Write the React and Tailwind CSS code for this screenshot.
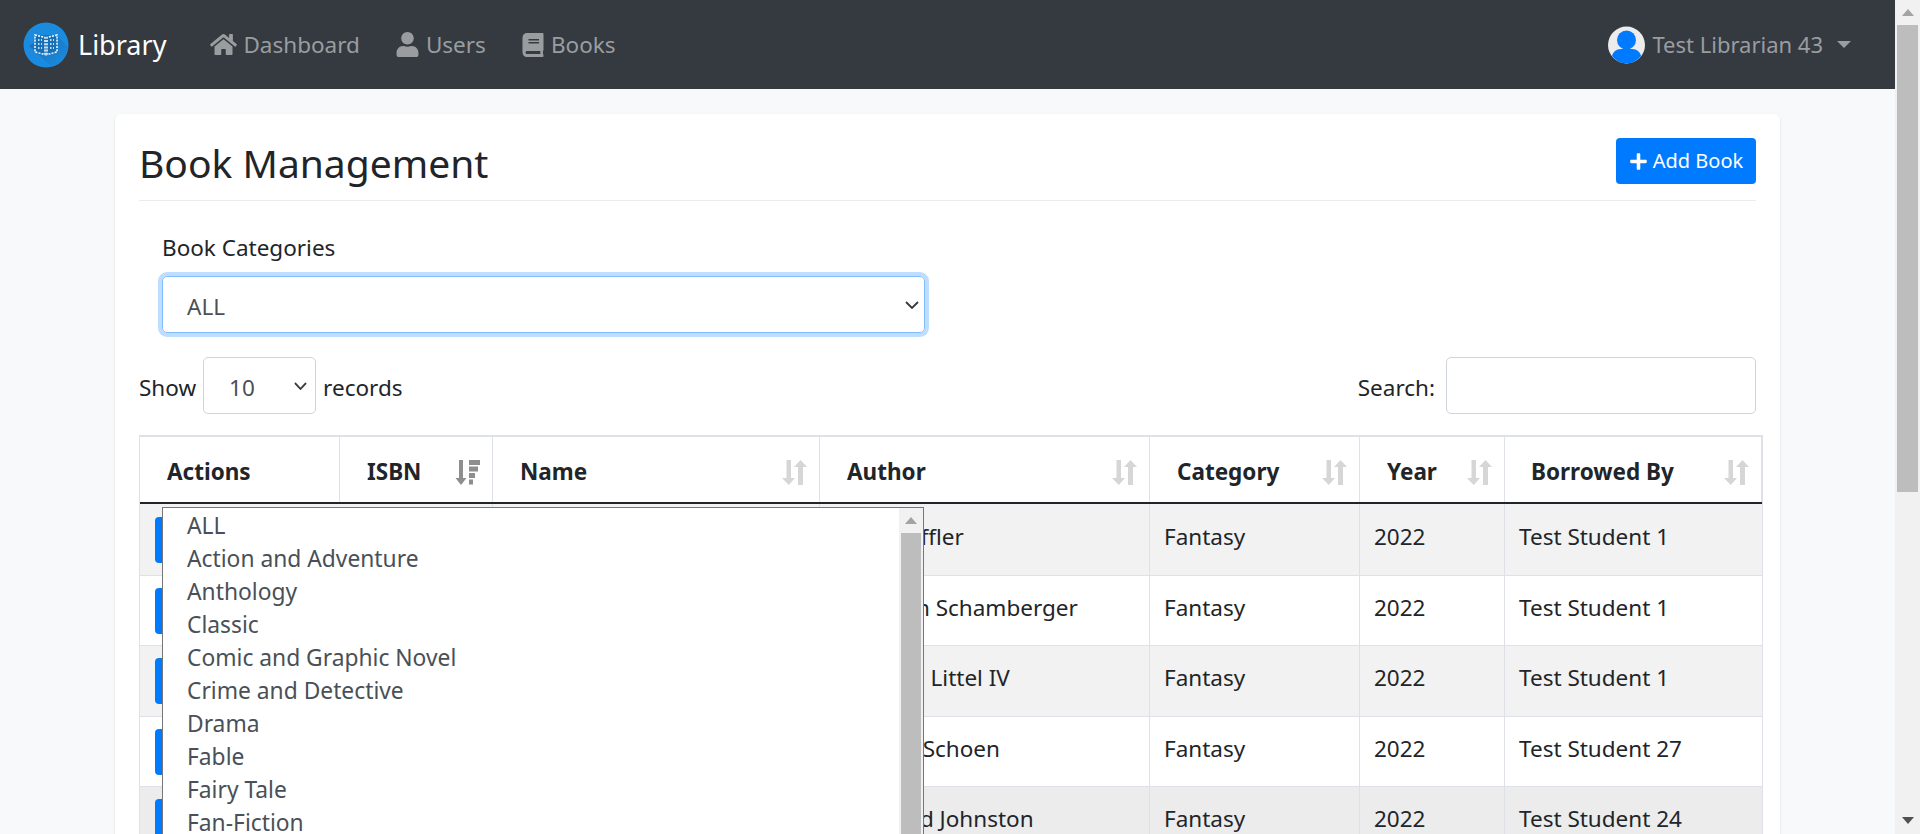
import { FaHome, FaUser, FaBook, FaPlus } from 'react-icons/fa'

const font = { fontFamily: '"Noto Sans", sans-serif' }

const categories = [
  'ALL', 'Action and Adventure', 'Anthology', 'Classic', 'Comic and Graphic Novel',
  'Crime and Detective', 'Drama', 'Fable', 'Fairy Tale', 'Fan-Fiction',
]

const rows = [
  { author: 'Mrs. Pfeffler', by: 'Test Student 1', h: 'h-[72px]', bg: 'bg-[#f2f2f2]' },
  { author: 'Jonathon Schamberger', by: 'Test Student 1', h: 'h-[70px]', bg: 'bg-white' },
  { author: 'Mr. Theo Littel IV', by: 'Test Student 1', h: 'h-[71px]', bg: 'bg-[#f2f2f2]' },
  { author: 'Martina Schoen', by: 'Test Student 27', h: 'h-[70px]', bg: 'bg-white' },
  { author: 'Bernhard Johnston', by: 'Test Student 24', h: 'h-[71px]', bg: 'bg-[#ececec]' },
]

function SortIcon() {
  return (
    <svg width="25" height="25" viewBox="0 0 25 25" fill="#d6d6d6" className="shrink-0">
      <path d="M4.500 0h4.500v18h4L6.750 25 0 18h4.500z" />
      <path d="M16 25h5V7h4L18.500 0 12 7h4z" />
    </svg>
  )
}

function SortActiveIcon() {
  return (
    <svg width="25" height="25" viewBox="0 0 25 25" fill="#8e8e8e" className="shrink-0">
      <path d="M4 0h4v18h3.500L6 25 .5 18H4z" />
      <path d="M14 0h11v5H14zM14 6.500h9v5h-9zM14 13h6v5h-6zM14 19.500h4v5h-4z" />
    </svg>
  )
}

function Chevron({ w = 14 }) {
  return (
    <svg width={w} height="8" viewBox="0 0 14 8" fill="none" stroke="#343a40" strokeWidth="1.800" preserveAspectRatio="none">
      <path d="M1 1l6 6 6-6" />
    </svg>
  )
}

function Logo() {
  return (
    <svg width="46" height="46" viewBox="0 0 46 46">
      <defs>
        <clipPath id="logo-clip"><circle cx="23" cy="23" r="22.500" /></clipPath>
        <linearGradient id="logo-shadow" x1="0.100" y1="0.100" x2="0.900" y2="0.900">
          <stop offset="0" stopColor="#1670b8" />
          <stop offset="1" stopColor="#1b8be0" />
        </linearGradient>
      </defs>
      <circle cx="23" cy="23" r="22.500" fill="#1b8be0" />
      <path d="M12 13L34 13L46 27V46H30L6 24L12 20z" fill="url(#logo-shadow)" clipPath="url(#logo-clip)" />
      <path d="M12 13l10 2.500v17L12 30zM34 13l-10 2.500v17L34 30z" fill="#176fb5" stroke="#fff" strokeWidth="1.500" strokeDasharray="2 1.200" />
      <path d="M15 18h4M15 22h4M15 26h4M27 18h4M27 22h4M27 26h4" stroke="#fff" strokeWidth="1.500" strokeDasharray="1.500 1.500" />
    </svg>
  )
}

function Avatar() {
  return (
    <svg width="37" height="38" viewBox="0 0 37 38" className="shrink-0">
      <circle cx="18.500" cy="19" r="18.500" fill="#ececec" />
      <circle cx="18.500" cy="14" r="9.500" fill="#007bff" />
      <path d="M4 30c1-4 4-7 9-7h11c5 0 8 3 9 7a18 18 0 0 1-29 0z" fill="#007bff" />
    </svg>
  )
}

function NavLink({ icon, label }) {
  return (
    <a className="flex items-center gap-[6px] text-[22.5px] text-[#9a9da0]">
      {icon}
      <span>{label}</span>
    </a>
  )
}

function Th({ label, w, icon, pad = 'pl-[27px]' }) {
  return (
    <div className={`${w} ${pad} flex items-center justify-between border-r border-[#dee2e6] pr-[12px] pt-[5px] text-[22.5px] font-bold text-[#212529]`}>
      <span>{label}</span>
      {icon}
    </div>
  )
}

export default function App() {
  return (
    <div className="flex h-[834px] w-[1920px] overflow-hidden bg-[#f8f9fa]" style={font}>
      <div className="relative flex w-[1895px] flex-col">
        <nav className="flex h-[89px] shrink-0 items-center bg-[#343a40] pl-[23px] pr-[44px]">
          <Logo />
          <span className="ml-[9px] pt-[2px] text-[27px] text-white">Library</span>
          <div className="ml-[44px] flex items-center gap-[35px]">
            <NavLink icon={<FaHome size={27} />} label="Dashboard" />
            <NavLink icon={<FaUser size={25} />} label="Users" />
            <NavLink icon={<FaBook size={24} />} label="Books" />
          </div>
          <div className="ml-auto flex items-center text-[22px] text-[#9a9da0]">
            <Avatar />
            <span className="ml-[7px]">Test Librarian 43</span>
            <span className="ml-[14px] h-0 w-0 border-x-[7px] border-t-[7px] border-x-transparent border-t-[#9a9da0]" />
          </div>
        </nav>

        <main className="ml-[115px] mt-[25px] w-[1665px] rounded-[6px] bg-white px-[24px] pt-[24px] shadow-sm">
          <div className="flex h-[63px] items-start justify-between border-b border-[#e9ecef]">
            <h2 className="text-[39px] leading-[50px] text-[#212529]">Book Management</h2>
            <button className="flex h-[46px] w-[140px] items-center justify-center gap-[5px] rounded-[4px] bg-[#007bff] text-[20px] text-white">
              <FaPlus size={19} />
              Add Book
            </button>
          </div>

          <div className="mt-[31px] pl-[23px]">
            <div className="text-[22.5px] leading-[32px] text-[#212529]">Book Categories</div>
            <div className="mt-[12px] flex h-[57px] w-[763px] items-center justify-between rounded-[5px] border border-[#80bdff] pl-[24px] pr-[5px] text-[22.5px] text-[#495057] shadow-[0_0_0_4px_rgba(0,123,255,0.25)]">
              <span className="pt-[5px]">ALL</span>
              <Chevron />
            </div>
          </div>

          <div className="mt-[24px] flex h-[57px] items-center justify-between">
            <div className="flex items-center text-[22.5px] text-[#212529]">
              <span className="pt-[4px]">Show</span>
              <div className="ml-[7px] flex h-[57px] w-[113px] items-center justify-between rounded-[5px] border border-[#ced4da] pl-[25px] pr-[8px] text-[#495057]">
                <span className="pt-[4px]">10</span>
                <Chevron w={13} />
              </div>
              <span className="ml-[7px] pt-[4px]">records</span>
            </div>
            <div className="flex items-center text-[22.5px] text-[#212529]">
              <span className="pt-[4px]">Search:</span>
              <div className="ml-[11px] h-[57px] w-[310px] rounded-[5px] border border-[#ced4da]" />
            </div>
          </div>

          <div className="-mr-[7px] mt-[21px] border-x border-t-2 border-[#dee2e6]">
            <div className="flex h-[67px] border-b-2 border-[#212529]">
              <Th label="Actions" w="w-[200px]" />
              <Th label="ISBN" w="w-[153px]" icon={<SortActiveIcon />} />
              <Th label="Name" w="w-[327px]" icon={<SortIcon />} />
              <Th label="Author" w="w-[330px]" icon={<SortIcon />} />
              <Th label="Category" w="w-[210px]" icon={<SortIcon />} />
              <Th label="Year" w="w-[145px]" icon={<SortIcon />} />
              <Th label="Borrowed By" w="flex-1" pad="pl-[26px]" icon={<SortIcon />} />
            </div>
            {rows.map((r) => (
              <div key={r.author} className={`flex ${r.h} ${r.bg} border-b border-[#dee2e6] text-[22.5px] text-[#212529]`}>
                <div className="flex w-[353px] items-center border-r border-[#dee2e6] pl-[15px]">
                  <span className="h-[46px] w-[60px] rounded-[4px] bg-[#007bff]" />
                </div>
                <div className="w-[327px] border-r border-[#dee2e6]" />
                <div className="flex w-[330px] items-center border-r border-[#dee2e6] pb-[6px] pl-[14px]">{r.author}</div>
                <div className="flex w-[210px] items-center border-r border-[#dee2e6] pb-[6px] pl-[14px]">Fantasy</div>
                <div className="flex w-[145px] items-center border-r border-[#dee2e6] pb-[6px] pl-[14px]">2022</div>
                <div className="flex flex-1 items-center pb-[6px] pl-[14px]">{r.by}</div>
              </div>
            ))}
          </div>
        </main>

        <div className="absolute left-[162px] top-[507px] flex h-[327px] w-[762px] border border-b-0 border-[#767676] bg-white text-[22.8px] leading-[33px] text-[#495057]">
          <ul className="flex-1 pl-[24px] pt-[1px]">
            {categories.map((c) => (
              <li key={c}>{c}</li>
            ))}
          </ul>
          <div className="flex w-[24px] shrink-0 flex-col bg-[#f1f1f1]">
            <div className="flex h-[25px] items-center justify-center">
              <span className="h-0 w-0 border-x-[6px] border-b-[7px] border-x-transparent border-b-[#a3a3a3]" />
            </div>
            <div className="mx-[2px] flex-1 bg-[#bdbdbd]" />
          </div>
        </div>
      </div>

      <div className="flex w-[25px] flex-col bg-[#f1f1f1]">
        <div className="flex h-[25px] w-full items-center justify-center">
          <span className="h-0 w-0 border-x-[6px] border-b-[7px] border-x-transparent border-b-[#a3a3a3]" />
        </div>
        <div className="mx-[2px] h-[467px] bg-[#bdbdbd]" />
        <div className="flex-1" />
        <div className="flex h-[27px] w-full items-center justify-center">
          <span className="h-0 w-0 border-x-[6px] border-t-[7px] border-x-transparent border-t-[#505050]" />
        </div>
      </div>
    </div>
  )
}
